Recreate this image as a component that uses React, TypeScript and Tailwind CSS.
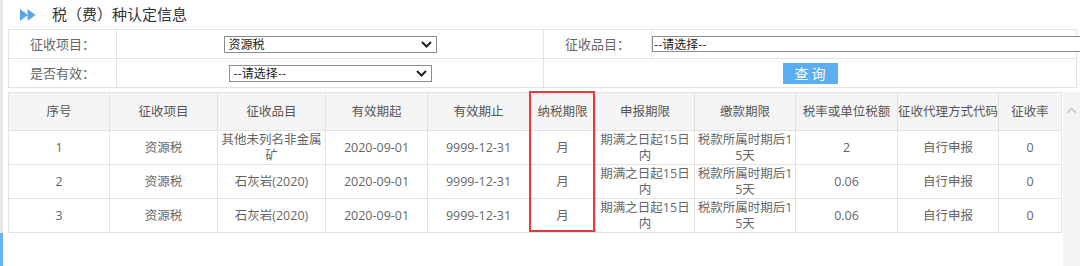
import React from 'react';

const colWidths = [
  'w-[101px]',
  'w-[108px]',
  'w-[108px]',
  'w-[102px]',
  'w-[102px]',
  'w-[66px]',
  'w-[99px]',
  'w-[101px]',
  'w-[102px]',
  'w-[101px]',
  'w-[63px]',
];

const headers = [
  '序号',
  '征收项目',
  '征收品目',
  '有效期起',
  '有效期止',
  '纳税期限',
  '申报期限',
  '缴款期限',
  '税率或单位税额',
  '征收代理方式代码',
  '征收率',
];

const rows = [
  ['1', '资源税', '其他未列名非金属矿', '2020-09-01', '9999-12-31', '月', '期满之日起15日内', '税款所属时期后15天', '2', '自行申报', '0'],
  ['2', '资源税', '石灰岩(2020)', '2020-09-01', '9999-12-31', '月', '期满之日起15日内', '税款所属时期后15天', '0.06', '自行申报', '0'],
  ['3', '资源税', '石灰岩(2020)', '2020-09-01', '9999-12-31', '月', '期满之日起15日内', '税款所属时期后15天', '0.06', '自行申报', '0'],
];

const Chevron = () => (
  <svg width="11" height="7" viewBox="0 0 11 7" className="shrink-0">
    <path d="M1 1 L5.5 5.5 L10 1" fill="none" stroke="#222" strokeWidth="2" />
  </svg>
);

const FakeSelect = ({ text, width }: { text: string; width: string }) => (
  <div
    className={`${width} h-[17px] flex items-center justify-between border border-[#8c8c8c] bg-white pl-[4px] pr-[4px] text-[12px] text-[#222]`}
  >
    <span className="leading-none">{text}</span>
    <Chevron />
  </div>
);

const App = () => {
  return (
    <div className="w-[1080px] h-[266px] overflow-hidden bg-white flex font-['Open_Sans','Noto_Sans_CJK_SC',sans-serif]">
      {/* left rail */}
      <div className="w-[3px] shrink-0 flex flex-col">
        <div className="flex-1 bg-[#e6e6e6]" />
        <div className="h-[33px] bg-[#6cb2f2]" />
      </div>

      <div className="flex-1 min-w-0 pl-[5px] flex flex-col">
        {/* title */}
        <div className="h-[29px] flex items-center">
          <svg width="16" height="12" viewBox="0 0 16 12" className="ml-[12px]">
            <polygon points="0,0 8,6 0,12" fill="#5aa6ee" />
            <polygon points="7.5,0 15.5,6 7.5,12" fill="#5aa6ee" />
          </svg>
          <h1 className="ml-[16px] text-[15px] text-[#333] font-normal m-0 font-['Noto_Sans_CJK_SC',sans-serif]">
            税（费）种认定信息
          </h1>
        </div>

        {/* query form */}
        <div className="w-[1069px] shrink-0 border border-[#e3e3e3] text-[13px] text-[#666] font-['Noto_Sans_CJK_SC',sans-serif]">
          <div className="h-[29px] flex border-b border-[#e3e3e3]">
            <div className="w-[108px] shrink-0 border-r border-[#e3e3e3] flex items-center justify-center">征收项目：</div>
            <div className="w-[427px] shrink-0 border-r border-[#e3e3e3] flex items-center justify-center">
              <FakeSelect text="资源税" width="w-[213px]" />
            </div>
            <div className="w-[108px] shrink-0 border-r border-[#e3e3e3] flex items-center justify-center">征收品目：</div>
            <div className="flex-1 min-w-0 flex items-center">
              <div className="relative z-10 shrink-0 w-[440px] h-[16px] flex items-center border border-[#8c8c8c] bg-white pl-[1px] text-[12px] text-[#222]">
                --请选择--
              </div>
            </div>
          </div>
          <div className="h-[28px] flex">
            <div className="w-[108px] shrink-0 border-r border-[#e3e3e3] flex items-center justify-center">是否有效：</div>
            <div className="w-[427px] shrink-0 border-r border-[#e3e3e3] flex items-center justify-center">
              <FakeSelect text="--请选择--" width="w-[203px]" />
            </div>
            <div className="flex-1 min-w-0 flex items-center justify-center">
              <button className="w-[55px] h-[21px] bg-[#5aaef2] text-white text-[14px] leading-none">查 询</button>
            </div>
          </div>
        </div>

        {/* results */}
        <div className="flex-1 flex mt-[4px]">
          <div className="relative self-start shrink-0">
            <table className="table-fixed border-collapse w-[1053px] text-[12.5px] text-[#666] leading-[16px]">
              <colgroup>
                {colWidths.map((w, i) => (
                  <col key={i} className={w} />
                ))}
              </colgroup>
              <thead>
                <tr className="h-[38px] bg-[#f5f5f5]">
                  {headers.map((h) => (
                    <th key={h} className="border border-[#e2e2e2] font-normal text-[#555] whitespace-nowrap p-0 text-center">
                      {h}
                    </th>
                  ))}
                </tr>
              </thead>
              <tbody>
                {rows.map((r, ri) => (
                  <tr key={ri} className="h-[34px]">
                    {r.map((c, ci) => (
                      <td key={ci} className="border border-[#e2e2e2] px-[2px] py-0 text-center break-all">
                        {c}
                      </td>
                    ))}
                  </tr>
                ))}
              </tbody>
            </table>
            {/* highlight on 纳税期限 */}
            <div className="absolute left-[521px] top-[-1px] w-[66px] h-[141px] border-2 border-[#ea3b3b] pointer-events-none" />
          </div>
          <div className="flex-1 ml-[1px] bg-[#f4f4f4] flex justify-center pt-[15px]">
            <svg width="11" height="7" viewBox="0 0 11 7">
              <path d="M1 6 L5.5 1.5 L10 6" fill="none" stroke="#c4c4c4" strokeWidth="1.5" />
            </svg>
          </div>
        </div>
      </div>
    </div>
  );
};

export default App;
